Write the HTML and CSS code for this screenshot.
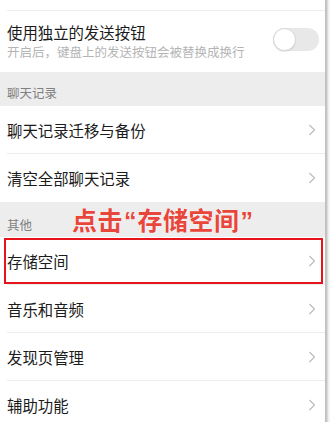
FILE: index.html
```html
<!DOCTYPE html>
<html lang="zh-CN">
<head>
<meta charset="utf-8">
<link rel="stylesheet" href="styles.css">
</head>
<body>
<div class="screen">
  <div class="page">
    <div class="stub"><div class="stub-line"></div></div>
    <div class="switch-cell">
      <div class="switch-text">
        <div class="title">使用独立的发送按钮</div>
        <div class="subtitle">开启后，键盘上的发送按钮会被替换成换行</div>
      </div>
      <div class="toggle"><div class="knob"></div></div>
    </div>

    <div class="section">聊天记录</div>
    <div class="group">
      <div class="cell"><div class="cell-body"><span class="label">聊天记录迁移与备份</span><svg class="chev" width="8" height="12" viewBox="0 0 8 12"><polyline points="1.5,1 6.5,6 1.5,11" fill="none" stroke="#b8b8b8" stroke-width="1.1"/></svg></div></div>
      <div class="cell"><div class="cell-body"><span class="label">清空全部聊天记录</span><svg class="chev" width="8" height="12" viewBox="0 0 8 12"><polyline points="1.5,1 6.5,6 1.5,11" fill="none" stroke="#b8b8b8" stroke-width="1.1"/></svg></div></div>
    </div>

    <div class="section section-other">其他<span class="callout">点击<span class="q">“</span>存储空间<span class="q">”</span></span></div>
    <div class="group">
      <div class="cell highlighted"><div class="cell-body"><span class="label">存储空间</span><svg class="chev" width="8" height="12" viewBox="0 0 8 12"><polyline points="1.5,1 6.5,6 1.5,11" fill="none" stroke="#b8b8b8" stroke-width="1.1"/></svg></div><div class="redbox"></div></div>
      <div class="cell"><div class="cell-body"><span class="label">音乐和音频</span><svg class="chev" width="8" height="12" viewBox="0 0 8 12"><polyline points="1.5,1 6.5,6 1.5,11" fill="none" stroke="#b8b8b8" stroke-width="1.1"/></svg></div></div>
      <div class="cell"><div class="cell-body"><span class="label">发现页管理</span><svg class="chev" width="8" height="12" viewBox="0 0 8 12"><polyline points="1.5,1 6.5,6 1.5,11" fill="none" stroke="#b8b8b8" stroke-width="1.1"/></svg></div></div>
      <div class="cell"><div class="cell-body"><span class="label">辅助功能</span><svg class="chev" width="8" height="12" viewBox="0 0 8 12"><polyline points="1.5,1 6.5,6 1.5,11" fill="none" stroke="#b8b8b8" stroke-width="1.1"/></svg></div></div>
    </div>
  </div>
  <div class="edge"></div>
</div>
</body>
</html>
```
FILE: styles.css
```css
html, body {
  margin: 0;
  padding: 0;
  background: #ffffff;
}
body {
  font-family: "Noto Sans CJK SC", "Noto Sans", sans-serif;
  color: #1b1b1b;
  overflow: hidden;
}
.screen {
  display: flex;
  width: 330px;
  height: 422px;
  overflow: hidden;
}
.page {
  width: 325px;
  flex: 0 0 325px;
}
.edge {
  flex: 1;
  background: linear-gradient(to right, #bdbdbd 0, #c9c9c9 2px, #eeeeee 3px, #f7f7f7 5px);
}
.stub {
  height: 10px;
  padding-left: 7px;
}
.stub-line {
  height: 10px;
  border-bottom: 1px solid #ececec;
}
.switch-cell {
  display: flex;
  height: 62px;
  padding: 0 6px 0 7px;
  box-sizing: border-box;
}
.switch-text {
  flex: 1;
  padding-top: 12px;
}
.title {
  font-size: 15.4px;
  line-height: 20px;
  color: #1b1b1b;
}
.subtitle {
  margin-top: 2px;
  font-size: 12.5px;
  line-height: 16px;
  color: #b4b4b4;
}
.toggle {
  margin-top: 18px;
  width: 46px;
  height: 23px;
  border-radius: 12px;
  background: #e8e8e8;
  position: relative;
}
.knob {
  position: absolute;
  left: 0;
  top: 0;
  width: 21px;
  height: 21px;
  border-radius: 50%;
  background: #ffffff;
  border: 1px solid #d6d6d6;
  box-shadow: 0 1px 1px rgba(0,0,0,0.08);
}
.section {
  position: relative;
  height: 34px;
  box-sizing: border-box;
  padding: 12px 0 0 7px;
  background: #ededed;
  font-size: 12.5px;
  line-height: 17px;
  color: #808080;
}
.section-other {
  height: 35px;
  padding-top: 13.5px;
}
.callout {
  position: absolute;
  left: 72px;
  top: 3px;
  font-size: 25px;
  line-height: 28px;
  font-weight: 700;
  letter-spacing: 0.5px;
  color: #e9463b;
  text-shadow: 0 0 1px #ffffff, 0 0 1px #ffffff;
  white-space: nowrap;
}
.q {
  font-family: "Liberation Sans", "Noto Sans", sans-serif;
  font-weight: 700;
  letter-spacing: 0;
  margin: 0 1px;
}
.group {
  background: #ffffff;
}
.cell {
  position: relative;
  padding-left: 7px;
}
.cell-body {
  display: flex;
  align-items: center;
  justify-content: space-between;
  height: 47px;
  border-bottom: 1px solid #ececec;
  padding-right: 9px;
}
.group .cell:last-child .cell-body {
  border-bottom: none;
  height: 48px;
}
.label {
  font-size: 15.4px;
  line-height: 20px;
}
.chev {
  display: block;
}
.redbox {
  position: absolute;
  top: 1px;
  left: 4px;
  right: 2px;
  bottom: 1px;
  border: 2px solid #e8141b;
  pointer-events: none;
}
```
